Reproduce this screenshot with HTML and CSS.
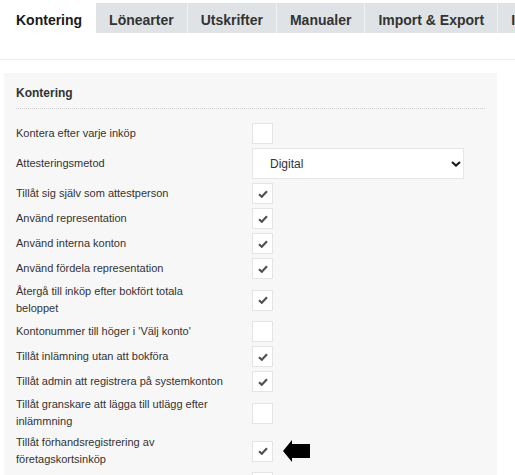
FILE: index.html
```html
<!DOCTYPE html>
<html lang="sv">

<head>
    <meta charset="UTF-8">
    <meta name="viewport" content="width=device-width, initial-scale=1.0">
    <title>Inställningar</title>
    <link rel="stylesheet" href="styles.css">
</head>

<body>
    <nav class="tabs">
        <a class="tab active">Kontering</a>
        <a class="tab">Lönearter</a>
        <a class="tab">Utskrifter</a>
        <a class="tab">Manualer</a>
        <a class="tab">Import &amp; Export</a>
        <a class="tab">Integrationer</a>
    </nav>
    <div class="toolbar"></div>

    <main class="panel">
        <h2 class="panel-title">Kontering</h2>
        <div class="settings">
            <div class="row">
                <label>Kontera efter varje inköp</label>
                <div class="control"><span class="box"></span></div>
            </div>
            <div class="row">
                <label>Attesteringsmetod</label>
                <div class="control">
                    <div class="select">
                        <span>Digital</span>
                        <svg class="chevron" viewBox="0 0 10 6" width="10" height="6">
                            <path d="M1 1 L5 4.6 L9 1" fill="none" stroke="#1e1e1e" stroke-width="2.2" />
                        </svg>
                    </div>
                </div>
            </div>
            <div class="row">
                <label>Tillåt sig själv som attestperson</label>
                <div class="control"><span class="box checked"><svg viewBox="0 0 10 8" width="10" height="8"><path d="M1 4.2 L3.8 6.8 L9 1.2" /></svg></span></div>
            </div>
            <div class="row">
                <label>Använd representation</label>
                <div class="control"><span class="box checked"><svg viewBox="0 0 10 8" width="10" height="8"><path d="M1 4.2 L3.8 6.8 L9 1.2" /></svg></span></div>
            </div>
            <div class="row">
                <label>Använd interna konton</label>
                <div class="control"><span class="box checked"><svg viewBox="0 0 10 8" width="10" height="8"><path d="M1 4.2 L3.8 6.8 L9 1.2" /></svg></span></div>
            </div>
            <div class="row">
                <label>Använd fördela representation</label>
                <div class="control"><span class="box checked"><svg viewBox="0 0 10 8" width="10" height="8"><path d="M1 4.2 L3.8 6.8 L9 1.2" /></svg></span></div>
            </div>
            <div class="row">
                <label>Återgå till inköp efter bokfört totala beloppet</label>
                <div class="control"><span class="box checked"><svg viewBox="0 0 10 8" width="10" height="8"><path d="M1 4.2 L3.8 6.8 L9 1.2" /></svg></span></div>
            </div>
            <div class="row">
                <label>Kontonummer till höger i 'Välj konto'</label>
                <div class="control"><span class="box"></span></div>
            </div>
            <div class="row">
                <label>Tillåt inlämning utan att bokföra</label>
                <div class="control"><span class="box checked"><svg viewBox="0 0 10 8" width="10" height="8"><path d="M1 4.2 L3.8 6.8 L9 1.2" /></svg></span></div>
            </div>
            <div class="row">
                <label>Tillåt admin att registrera på systemkonton</label>
                <div class="control"><span class="box checked"><svg viewBox="0 0 10 8" width="10" height="8"><path d="M1 4.2 L3.8 6.8 L9 1.2" /></svg></span></div>
            </div>
            <div class="row">
                <label>Tillåt granskare att lägga till utlägg efter inlämmning</label>
                <div class="control"><span class="box"></span></div>
            </div>
            <div class="row">
                <label>Tillåt förhandsregistrering av företagskortsinköp</label>
                <div class="control">
                    <span class="box checked"><svg viewBox="0 0 10 8" width="10" height="8"><path d="M1 4.2 L3.8 6.8 L9 1.2" /></svg></span>
                    <svg class="pointer" viewBox="0 0 28 22" width="28" height="22">
                        <polygon points="0,11 9,0 9,4 27,4 27,18 9,18 9,22" fill="#000" />
                    </svg>
                </div>
            </div>
            <div class="row">
                <label>Åtgärda kontering vid attest</label>
                <div class="control"><span class="box"></span></div>
            </div>
        </div>
    </main>
</body>

</html>
```

FILE: styles.css
```css
html,
body {
    overflow: hidden;
}

body {
    background-color: rgb(255, 255, 255);
    color: rgb(51, 51, 51);
    font-family: "Liberation Sans", Arial, sans-serif;
    margin: 0;
    padding: 0;
}

.tabs {
    display: flex;
    margin: 3px 0 0 3px;
    overflow: hidden;
    white-space: nowrap;
}

.tab {
    background-color: rgb(223, 227, 230);
    border-right: 1px solid rgb(238, 240, 242);
    box-sizing: border-box;
    color: rgb(51, 51, 51);
    flex-shrink: 0;
    font-size: 14px;
    font-weight: bold;
    height: 30px;
    line-height: 26px;
    padding: 4px 13px 0;
}

.tab.active {
    background-color: rgb(255, 255, 255);
    border-right: none;
    box-shadow: 0 0 2px rgba(0, 0, 0, 0.08);
    color: rgb(26, 26, 26);
    padding: 4px 14px 0 13px;
}

.toolbar {
    border-bottom: 1px solid rgb(236, 236, 236);
    height: 26px;
}

.panel {
    background-color: rgb(247, 247, 247);
    margin: 13px 18px 0 4px;
    padding: 12px 12px 20px;
}

.panel-title {
    border-bottom: 1px dotted rgb(208, 208, 208);
    font-size: 12px;
    line-height: 17px;
    margin: 0 0 12px;
    padding-bottom: 6px;
}

.row {
    align-items: center;
    display: grid;
    grid-template-columns: 236px 1fr;
    padding: 2px 0;
}

.row label {
    font-size: 11px;
    line-height: 17px;
    padding-right: 26px;
}

.control {
    align-items: center;
    display: flex;
    gap: 10px;
}

.box {
    align-items: center;
    background-color: rgb(255, 255, 255);
    border: 1px solid rgb(228, 228, 228);
    box-sizing: border-box;
    display: flex;
    height: 21px;
    justify-content: center;
    width: 21px;
}

.box svg path {
    fill: none;
    stroke: rgb(80, 80, 80);
    stroke-width: 2.1;
}

.select {
    align-items: center;
    background-color: rgb(255, 255, 255);
    border: 1px solid rgb(230, 230, 230);
    box-sizing: border-box;
    display: flex;
    font-size: 12px;
    height: 31px;
    padding-left: 17px;
    position: relative;
    width: 212px;
}

.chevron {
    position: absolute;
    right: 2px;
    top: 12px;
}

.pointer {
    display: block;
}
```
